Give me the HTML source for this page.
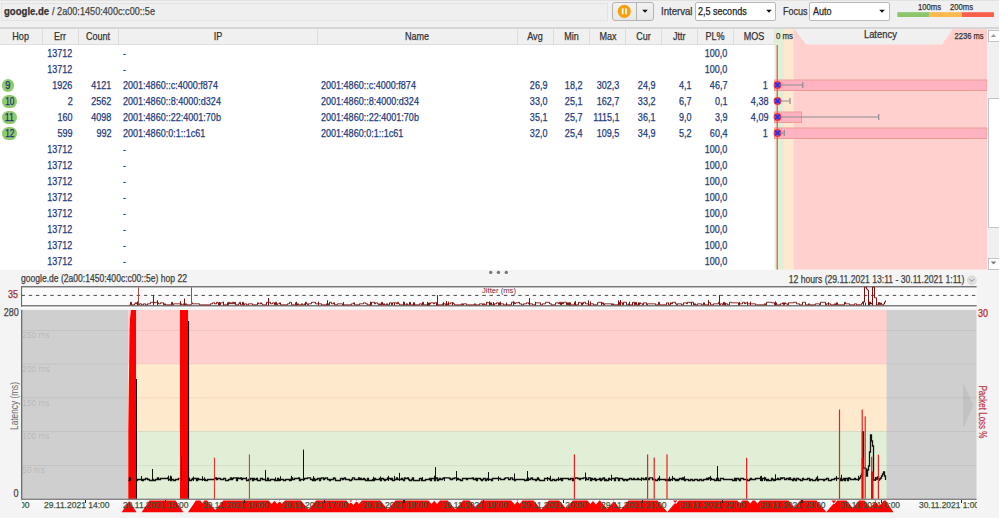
<!DOCTYPE html>
<html><head><meta charset="utf-8"><style>
html,body{margin:0;padding:0;width:999px;height:518px;overflow:hidden;background:#f0f0f0;position:relative}
.t{position:absolute;white-space:pre;font-family:"Liberation Sans",sans-serif;-webkit-text-stroke:0.25px currentColor}
</style></head><body>
<div style="position:absolute;left:0px;top:0px;width:999px;height:1px;background:#e2e2e2;"></div><div style="position:absolute;left:0.5px;top:2.5px;width:607.5px;height:18.0px;background:#efefef;border:1px solid #e3e3e3;box-sizing:border-box;"></div><div style="position:absolute;left:611.5px;top:1.5px;width:42px;height:19px;border:1px solid #b4b4b4;border-radius:3px;box-sizing:border-box;background:linear-gradient(#f2f2f2,#e8e8e8)"></div><div style="position:absolute;left:636px;top:2px;width:1px;height:18px;background:#b4b4b4;"></div><div style="position:absolute;left:694.5px;top:1.5px;width:81px;height:19px;border:1px solid #b9b9b9;border-radius:2px;box-sizing:border-box;background:#fff"></div><div style="position:absolute;left:808.5px;top:1.5px;width:81.5px;height:19px;border:1px solid #b9b9b9;border-radius:2px;box-sizing:border-box;background:#fff"></div><svg style="position:absolute;left:0;top:0" width="999" height="30"><circle cx="624.3" cy="11.3" r="6.6" fill="#f9a10b"/><rect x="621.8" y="8.3" width="1.7" height="6" fill="#fff"/><rect x="625.2" y="8.3" width="1.7" height="6" fill="#fff"/><path d="M642.2 9.8 L647.8 9.8 L645 12.8 Z" fill="#111"/><path d="M766.2 9.8 L771.8 9.8 L769 12.8 Z" fill="#111"/><path d="M879.2 9.8 L884.8 9.8 L882 12.8 Z" fill="#111"/><rect x="897.3" y="12.2" width="32.2" height="4.8" fill="#8cc56a"/><rect x="929.5" y="12.2" width="32.4" height="4.8" fill="#fcb94d"/><rect x="961.9" y="12.2" width="32.1" height="4.8" fill="#f9604e"/></svg><div style="position:absolute;left:0px;top:27px;width:999px;height:2px;background:#d6d6d6;"></div><div style="position:absolute;left:0px;top:43.5px;width:774.5px;height:1.0px;background:#dedede;"></div><div style="position:absolute;left:41.5px;top:29px;width:1.0px;height:14.5px;background:#dcdcdc;"></div><div style="position:absolute;left:77.5px;top:29px;width:1.0px;height:14.5px;background:#dcdcdc;"></div><div style="position:absolute;left:118.0px;top:29px;width:1.0px;height:14.5px;background:#dcdcdc;"></div><div style="position:absolute;left:316.5px;top:29px;width:1.0px;height:14.5px;background:#dcdcdc;"></div><div style="position:absolute;left:516.5px;top:29px;width:1.0px;height:14.5px;background:#dcdcdc;"></div><div style="position:absolute;left:552.5px;top:29px;width:1.0px;height:14.5px;background:#dcdcdc;"></div><div style="position:absolute;left:589.0px;top:29px;width:1.0px;height:14.5px;background:#dcdcdc;"></div><div style="position:absolute;left:625.0px;top:29px;width:1.0px;height:14.5px;background:#dcdcdc;"></div><div style="position:absolute;left:661.0px;top:29px;width:1.0px;height:14.5px;background:#dcdcdc;"></div><div style="position:absolute;left:697.0px;top:29px;width:1.0px;height:14.5px;background:#dcdcdc;"></div><div style="position:absolute;left:733.0px;top:29px;width:1.0px;height:14.5px;background:#dcdcdc;"></div><div style="position:absolute;left:774.0px;top:29px;width:1.0px;height:14.5px;background:#dcdcdc;"></div><div style="position:absolute;left:0px;top:44.5px;width:774.5px;height:225.0px;background:#fff;"></div><svg style="position:absolute;left:0;top:0" width="999" height="270"><rect x="774.5" y="29" width="9.5" height="240.5" fill="#e1efd8"/><rect x="784" y="29" width="9.5" height="240.5" fill="#fde9cf"/><rect x="793.5" y="29" width="193.5" height="240.5" fill="#ffd0ce"/><path d="M794.5 29 L806 44.5 L942 44.5 L952.7 29 Z" fill="#f0f0f0"/><rect x="774.5" y="80" width="212.5" height="10.5" fill="#ffb2c0" stroke="#f09a96" stroke-width="1"/><rect x="774.5" y="112" width="27.0" height="10.5" fill="#ffb2c0" stroke="#f09a96" stroke-width="1"/><rect x="774.5" y="128" width="212.5" height="10.5" fill="#ffb2c0" stroke="#f09a96" stroke-width="1"/><rect x="776.6" y="45" width="1.3" height="224.5" fill="#ea5a4c"/><path d="M778 85 H802.8 M802.8 82 V88" stroke="#8c8c8c" stroke-width="1.2" fill="none"/><path d="M778 101 H790 M790 98 V104" stroke="#8c8c8c" stroke-width="1.2" fill="none"/><path d="M778 117 H878.7 M878.7 114 V120" stroke="#8c8c8c" stroke-width="1.2" fill="none"/><path d="M778 133 H784.3 M784.3 130 V136" stroke="#8c8c8c" stroke-width="1.2" fill="none"/><circle cx="777.5" cy="85" r="3.3" fill="#7a4ad0" stroke="#f03a3a" stroke-width="1.2"/><path d="M775.2 82.7 L779.8 87.3 M779.8 82.7 L775.2 87.3" stroke="#1a30ff" stroke-width="1.5"/><circle cx="777.5" cy="101" r="3.3" fill="#7a4ad0" stroke="#f03a3a" stroke-width="1.2"/><path d="M775.2 98.7 L779.8 103.3 M779.8 98.7 L775.2 103.3" stroke="#1a30ff" stroke-width="1.5"/><circle cx="777.5" cy="117" r="3.3" fill="#7a4ad0" stroke="#f03a3a" stroke-width="1.2"/><path d="M775.2 114.7 L779.8 119.3 M779.8 114.7 L775.2 119.3" stroke="#1a30ff" stroke-width="1.5"/><circle cx="777.5" cy="133" r="3.3" fill="#7a4ad0" stroke="#f03a3a" stroke-width="1.2"/><path d="M775.2 130.7 L779.8 135.3 M779.8 130.7 L775.2 135.3" stroke="#1a30ff" stroke-width="1.5"/></svg><div style="position:absolute;left:987px;top:29px;width:12px;height:240.5px;background:#f0f0f0;"></div><div style="position:absolute;left:988px;top:29.5px;width:12px;height:12px;border:1px solid #c4c4c4;box-sizing:border-box;background:#fff"></div><div style="position:absolute;left:988px;top:98.4px;width:12px;height:129.6px;border:1px solid #c4c4c4;box-sizing:border-box;background:#fff"></div><div style="position:absolute;left:988px;top:257.6px;width:12px;height:12px;border:1px solid #c4c4c4;box-sizing:border-box;background:#fff"></div><svg style="position:absolute;left:0;top:0" width="999" height="270"><path d="M990.8 37 L996.2 37 L993.5 34 Z" fill="#9a9a9a"/><path d="M990.8 261.5 L996.2 261.5 L993.5 264.5 Z" fill="#7a7a7a"/></svg><div style="position:absolute;left:0px;top:269.5px;width:999px;height:248.5px;background:#f4f4f4;"></div><svg style="position:absolute;left:0;top:0" width="999" height="518"><rect x="21" y="286.3" width="955.6" height="20" fill="#fbfbfb"/><rect x="21" y="286.1" width="955.6" height="1.3" fill="#686868"/><rect x="21" y="305" width="955.6" height="1.7" fill="#7c7c7c"/><rect x="21" y="306.7" width="955.6" height="1.3" fill="#fcfcfc"/><rect x="21" y="286.1" width="1.1" height="20.6" fill="#6a6a6a"/><line x1="21.5" y1="295.4" x2="976" y2="295.4" stroke="#4a4a4a" stroke-width="1" stroke-dasharray="3.4 3.8"/><path d="M129.5 304.8 H130.5 V302.3 H131.5 V304.8 H132.5 V304.8 H133.5 V304.8 H134.5 V303.8 H135.5 V302.8 H136.5 V303.8 H137.5 V303.8 H138.5 V304.8 H139.5 V303.8 H140.5 V303.8 H141.5 V304.8 H142.5 V304.8 H143.5 V303.8 H144.5 V303.8 H145.5 V304.8 H146.5 V304.8 H147.5 V303.8 H148.5 V303.8 H149.5 V303.8 H150.5 V302.3 H151.5 V302.3 H152.5 V302.3 H153.5 V302.3 H154.5 V302.8 H155.5 V302.3 H156.5 V302.3 H157.5 V302.8 H158.5 V303.8 H159.5 V303.8 H160.5 V302.8 H161.5 V302.8 H162.5 V302.8 H163.5 V304.8 H164.5 V303.8 H165.5 V304.8 H166.5 V304.8 H167.5 V304.8 H168.5 V304.8 H169.5 V304.8 H170.5 V304.8 H171.5 V302.3 H172.5 V304.8 H173.5 V303.8 H174.5 V303.8 H175.5 V303.8 H176.5 V303.8 H177.5 V303.8 H178.5 V303.8 H179.5 V303.8 H180.5 V303.8 H181.5 V304.8 H182.5 V304.8 H183.5 V303.8 H184.5 V304.8 H185.5 V303.8 H186.5 V304.8 H187.5 V304.8 H188.5 V304.8 H189.5 V304.8 H190.5 V304.8 H191.5 V302.8 H192.5 V303.8 H193.5 V303.8 H194.5 V303.8 H195.5 V303.8 H196.5 V303.8 H197.5 V303.8 H198.5 V303.8 H199.5 V304.8 H200.5 V304.8 H201.5 V304.8 H202.5 V304.8 H203.5 V304.8 H204.5 V304.8 H205.5 V304.8 H206.5 V304.8 H207.5 V304.8 H208.5 V304.8 H209.5 V304.8 H210.5 V303.8 H211.5 V303.8 H212.5 V302.8 H213.5 V302.8 H214.5 V303.8 H215.5 V303.8 H216.5 V302.3 H217.5 V302.8 H218.5 V304.8 H219.5 V304.8 H220.5 V302.8 H221.5 V302.8 H222.5 V302.8 H223.5 V304.8 H224.5 V304.8 H225.5 V304.8 H226.5 V304.8 H227.5 V304.8 H228.5 V302.3 H229.5 V303.8 H230.5 V302.8 H231.5 V303.8 H232.5 V302.3 H233.5 V303.8 H234.5 V302.3 H235.5 V304.8 H236.5 V304.8 H237.5 V304.8 H238.5 V303.8 H239.5 V302.3 H240.5 V304.8 H241.5 V304.8 H242.5 V302.3 H243.5 V304.8 H244.5 V303.8 H245.5 V303.8 H246.5 V304.8 H247.5 V304.8 H248.5 V303.8 H249.5 V303.8 H250.5 V303.8 H251.5 V303.8 H252.5 V304.8 H253.5 V304.8 H254.5 V304.8 H255.5 V304.8 H256.5 V304.8 H257.5 V302.8 H258.5 V303.8 H259.5 V303.8 H260.5 V302.8 H261.5 V303.8 H262.5 V304.8 H263.5 V304.8 H264.5 V304.8 H265.5 V304.8 H266.5 V302.3 H267.5 V302.3 H268.5 V302.3 H269.5 V302.3 H270.5 V303.8 H271.5 V303.8 H272.5 V302.8 H273.5 V302.8 H274.5 V304.8 H275.5 V302.3 H276.5 V304.8 H277.5 V303.8 H278.5 V303.8 H279.5 V302.8 H280.5 V304.8 H281.5 V304.8 H282.5 V304.8 H283.5 V304.8 H284.5 V304.8 H285.5 V304.8 H286.5 V304.8 H287.5 V303.8 H288.5 V303.8 H289.5 V302.3 H290.5 V302.3 H291.5 V304.8 H292.5 V304.8 H293.5 V304.8 H294.5 V304.8 H295.5 V302.8 H296.5 V304.8 H297.5 V303.8 H298.5 V304.8 H299.5 V304.8 H300.5 V304.8 H301.5 V303.8 H302.5 V304.8 H303.5 V304.8 H304.5 V303.8 H305.5 V302.3 H306.5 V303.8 H307.5 V304.8 H308.5 V303.8 H309.5 V303.8 H310.5 V303.8 H311.5 V302.3 H312.5 V302.3 H313.5 V302.3 H314.5 V302.3 H315.5 V303.8 H316.5 V303.8 H317.5 V303.8 H318.5 V303.8 H319.5 V303.8 H320.5 V303.8 H321.5 V304.8 H322.5 V304.8 H323.5 V304.8 H324.5 V304.8 H325.5 V304.8 H326.5 V303.8 H327.5 V303.8 H328.5 V304.8 H329.5 V302.3 H330.5 V302.3 H331.5 V303.8 H332.5 V303.8 H333.5 V302.8 H334.5 V304.8 H335.5 V304.8 H336.5 V304.8 H337.5 V303.8 H338.5 V303.8 H339.5 V303.8 H340.5 V303.8 H341.5 V303.8 H342.5 V304.8 H343.5 V304.8 H344.5 V304.8 H345.5 V304.8 H346.5 V304.8 H347.5 V304.8 H348.5 V304.8 H349.5 V304.8 H350.5 V304.8 H351.5 V303.8 H352.5 V303.8 H353.5 V302.8 H354.5 V304.8 H355.5 V304.8 H356.5 V304.8 H357.5 V304.8 H358.5 V304.8 H359.5 V303.8 H360.5 V303.8 H361.5 V303.8 H362.5 V303.8 H363.5 V302.8 H364.5 V302.8 H365.5 V303.8 H366.5 V303.8 H367.5 V304.8 H368.5 V304.8 H369.5 V304.8 H370.5 V304.8 H371.5 V302.3 H372.5 V302.3 H373.5 V302.3 H374.5 V303.8 H375.5 V302.8 H376.5 V302.8 H377.5 V303.8 H378.5 V304.8 H379.5 V303.8 H380.5 V304.8 H381.5 V302.3 H382.5 V304.8 H383.5 V303.8 H384.5 V304.8 H385.5 V304.8 H386.5 V303.8 H387.5 V304.8 H388.5 V304.8 H389.5 V302.8 H390.5 V302.8 H391.5 V304.8 H392.5 V302.8 H393.5 V302.8 H394.5 V302.8 H395.5 V302.8 H396.5 V303.8 H397.5 V302.3 H398.5 V303.8 H399.5 V304.8 H400.5 V304.8 H401.5 V304.8 H402.5 V304.8 H403.5 V302.3 H404.5 V304.8 H405.5 V304.8 H406.5 V303.8 H407.5 V304.8 H408.5 V304.8 H409.5 V302.3 H410.5 V304.8 H411.5 V304.8 H412.5 V304.8 H413.5 V304.8 H414.5 V304.8 H415.5 V304.8 H416.5 V304.8 H417.5 V304.8 H418.5 V304.8 H419.5 V303.8 H420.5 V303.8 H421.5 V304.8 H422.5 V302.3 H423.5 V304.8 H424.5 V304.8 H425.5 V304.8 H426.5 V304.8 H427.5 V304.8 H428.5 V304.8 H429.5 V303.8 H430.5 V302.8 H431.5 V302.8 H432.5 V302.8 H433.5 V303.8 H434.5 V302.8 H435.5 V302.8 H436.5 V304.8 H437.5 V304.8 H438.5 V304.8 H439.5 V304.8 H440.5 V304.8 H441.5 V304.8 H442.5 V303.8 H443.5 V303.8 H444.5 V303.8 H445.5 V304.8 H446.5 V304.8 H447.5 V303.8 H448.5 V303.8 H449.5 V303.8 H450.5 V302.8 H451.5 V302.8 H452.5 V302.8 H453.5 V303.8 H454.5 V304.8 H455.5 V304.8 H456.5 V304.8 H457.5 V304.8 H458.5 V304.8 H459.5 V304.8 H460.5 V304.8 H461.5 V303.8 H462.5 V304.8 H463.5 V303.8 H464.5 V303.8 H465.5 V303.8 H466.5 V304.8 H467.5 V304.8 H468.5 V304.8 H469.5 V304.8 H470.5 V304.8 H471.5 V304.8 H472.5 V304.8 H473.5 V304.8 H474.5 V303.8 H475.5 V304.8 H476.5 V304.8 H477.5 V304.8 H478.5 V304.8 H479.5 V303.8 H480.5 V303.8 H481.5 V303.8 H482.5 V304.8 H483.5 V303.8 H484.5 V304.8 H485.5 V304.8 H486.5 V302.3 H487.5 V302.8 H488.5 V302.8 H489.5 V304.8 H490.5 V302.8 H491.5 V304.8 H492.5 V304.8 H493.5 V304.8 H494.5 V303.8 H495.5 V303.8 H496.5 V302.8 H497.5 V302.8 H498.5 V304.8 H499.5 V302.8 H500.5 V303.8 H501.5 V303.8 H502.5 V303.8 H503.5 V304.8 H504.5 V304.8 H505.5 V304.8 H506.5 V304.8 H507.5 V304.8 H508.5 V304.8 H509.5 V304.8 H510.5 V304.8 H511.5 V302.3 H512.5 V302.3 H513.5 V302.3 H514.5 V303.8 H515.5 V302.8 H516.5 V302.8 H517.5 V302.8 H518.5 V302.3 H519.5 V303.8 H520.5 V303.8 H521.5 V304.8 H522.5 V304.8 H523.5 V303.8 H524.5 V303.8 H525.5 V303.8 H526.5 V302.8 H527.5 V302.8 H528.5 V303.8 H529.5 V303.8 H530.5 V303.8 H531.5 V303.8 H532.5 V304.8 H533.5 V304.8 H534.5 V304.8 H535.5 V302.8 H536.5 V302.8 H537.5 V302.8 H538.5 V302.8 H539.5 V302.8 H540.5 V304.8 H541.5 V304.8 H542.5 V303.8 H543.5 V303.8 H544.5 V303.8 H545.5 V302.3 H546.5 V302.3 H547.5 V302.3 H548.5 V302.3 H549.5 V303.8 H550.5 V303.8 H551.5 V304.8 H552.5 V304.8 H553.5 V304.8 H554.5 V304.8 H555.5 V302.8 H556.5 V302.8 H557.5 V302.8 H558.5 V303.8 H559.5 V302.3 H560.5 V304.8 H561.5 V302.3 H562.5 V303.8 H563.5 V302.3 H564.5 V302.3 H565.5 V302.3 H566.5 V304.8 H567.5 V302.8 H568.5 V304.8 H569.5 V302.8 H570.5 V304.8 H571.5 V304.8 H572.5 V304.8 H573.5 V304.8 H574.5 V302.3 H575.5 V304.8 H576.5 V304.8 H577.5 V304.8 H578.5 V302.3 H579.5 V302.8 H580.5 V302.8 H581.5 V304.8 H582.5 V303.8 H583.5 V302.3 H584.5 V302.3 H585.5 V303.8 H586.5 V303.8 H587.5 V303.8 H588.5 V304.8 H589.5 V304.8 H590.5 V303.8 H591.5 V303.8 H592.5 V303.8 H593.5 V304.8 H594.5 V304.8 H595.5 V304.8 H596.5 V304.8 H597.5 V302.8 H598.5 V302.3 H599.5 V302.3 H600.5 V302.3 H601.5 V303.8 H602.5 V302.8 H603.5 V304.8 H604.5 V303.8 H605.5 V303.8 H606.5 V303.8 H607.5 V303.8 H608.5 V303.8 H609.5 V303.8 H610.5 V303.8 H611.5 V304.8 H612.5 V303.8 H613.5 V304.8 H614.5 V304.8 H615.5 V304.8 H616.5 V304.8 H617.5 V304.8 H618.5 V304.8 H619.5 V302.3 H620.5 V302.8 H621.5 V302.8 H622.5 V304.8 H623.5 V302.3 H624.5 V302.3 H625.5 V302.3 H626.5 V304.8 H627.5 V304.8 H628.5 V303.8 H629.5 V304.8 H630.5 V304.8 H631.5 V304.8 H632.5 V302.8 H633.5 V302.3 H634.5 V304.8 H635.5 V302.3 H636.5 V304.8 H637.5 V304.8 H638.5 V304.8 H639.5 V302.8 H640.5 V303.8 H641.5 V303.8 H642.5 V304.8 H643.5 V302.8 H644.5 V302.8 H645.5 V302.8 H646.5 V304.8 H647.5 V303.8 H648.5 V303.8 H649.5 V303.8 H650.5 V303.8 H651.5 V303.8 H652.5 V303.8 H653.5 V303.8 H654.5 V303.8 H655.5 V304.8 H656.5 V304.8 H657.5 V304.8 H658.5 V302.3 H659.5 V304.8 H660.5 V304.8 H661.5 V304.8 H662.5 V304.8 H663.5 V304.8 H664.5 V304.8 H665.5 V304.8 H666.5 V302.8 H667.5 V302.8 H668.5 V304.8 H669.5 V304.8 H670.5 V302.8 H671.5 V303.8 H672.5 V302.3 H673.5 V302.3 H674.5 V302.3 H675.5 V303.8 H676.5 V304.8 H677.5 V303.8 H678.5 V303.8 H679.5 V303.8 H680.5 V303.8 H681.5 V304.8 H682.5 V304.8 H683.5 V302.8 H684.5 V302.8 H685.5 V302.8 H686.5 V303.8 H687.5 V302.3 H688.5 V302.3 H689.5 V302.8 H690.5 V302.3 H691.5 V302.3 H692.5 V302.3 H693.5 V304.8 H694.5 V303.8 H695.5 V304.8 H696.5 V304.8 H697.5 V303.8 H698.5 V303.8 H699.5 V303.8 H700.5 V303.8 H701.5 V304.8 H702.5 V304.8 H703.5 V302.8 H704.5 V304.8 H705.5 V304.8 H706.5 V304.8 H707.5 V304.8 H708.5 V302.3 H709.5 V302.8 H710.5 V304.8 H711.5 V304.8 H712.5 V304.8 H713.5 V303.8 H714.5 V303.8 H715.5 V303.8 H716.5 V303.8 H717.5 V303.8 H718.5 V302.3 H719.5 V304.8 H720.5 V303.8 H721.5 V303.8 H722.5 V304.8 H723.5 V302.3 H724.5 V304.8 H725.5 V303.8 H726.5 V303.8 H727.5 V304.8 H728.5 V304.8 H729.5 V302.3 H730.5 V302.3 H731.5 V302.8 H732.5 V302.8 H733.5 V302.8 H734.5 V302.8 H735.5 V302.8 H736.5 V302.8 H737.5 V302.8 H738.5 V304.8 H739.5 V303.8 H740.5 V303.8 H741.5 V303.8 H742.5 V302.3 H743.5 V302.3 H744.5 V303.8 H745.5 V302.8 H746.5 V302.8 H747.5 V303.8 H748.5 V303.8 H749.5 V303.8 H750.5 V303.8 H751.5 V303.8 H752.5 V303.8 H753.5 V303.8 H754.5 V303.8 H755.5 V304.8 H756.5 V304.8 H757.5 V304.8 H758.5 V304.8 H759.5 V304.8 H760.5 V304.8 H761.5 V304.8 H762.5 V304.8 H763.5 V304.8 H764.5 V303.8 H765.5 V304.8 H766.5 V302.3 H767.5 V302.3 H768.5 V302.3 H769.5 V302.3 H770.5 V302.3 H771.5 V302.8 H772.5 V302.8 H773.5 V302.8 H774.5 V304.8 H775.5 V302.8 H776.5 V304.8 H777.5 V304.8 H778.5 V304.8 H779.5 V304.8 H780.5 V303.8 H781.5 V303.8 H782.5 V302.8 H783.5 V304.8 H784.5 V302.8 H785.5 V303.8 H786.5 V303.8 H787.5 V304.8 H788.5 V302.8 H789.5 V302.8 H790.5 V302.8 H791.5 V302.8 H792.5 V302.8 H793.5 V302.3 H794.5 V302.3 H795.5 V302.3 H796.5 V303.8 H797.5 V303.8 H798.5 V303.8 H799.5 V304.8 H800.5 V304.8 H801.5 V304.8 H802.5 V302.3 H803.5 V302.3 H804.5 V302.3 H805.5 V304.8 H806.5 V304.8 H807.5 V304.8 H808.5 V303.8 H809.5 V304.8 H810.5 V304.8 H811.5 V304.8 H812.5 V304.8 H813.5 V304.8 H814.5 V304.8 H815.5 V303.8 H816.5 V303.8 H817.5 V303.8 H818.5 V303.8 H819.5 V304.8 H820.5 V302.3 H821.5 V302.3 H822.5 V302.3 H823.5 V302.3 H824.5 V302.3 H825.5 V304.8 H826.5 V303.8 H827.5 V303.8 H828.5 V303.8 H829.5 V303.8 H830.5 V304.8 H831.5 V304.8 H832.5 V304.8 H833.5 V304.8 H834.5 V303.8 H835.5 V304.8 H836.5 V302.8 H837.5 V304.8 H838.5 V304.8 H839.5 V304.8 H840.5 V304.8 H841.5 V304.8 H842.5 V304.8 H843.5 V304.8 H844.5 V302.3 H845.5 V303.8 H846.5 V303.8 H847.5 V303.8 H848.5 V303.8 H849.5 V304.8 H850.5 V304.8 H851.5 V304.8 H852.5 V304.8 H853.5 V304.8 H854.5 V303.8 H855.5 V303.8 H856.5 V304.8 H857.5 V304.8 H858.5 V304.7 H859.5 V304.7 H860.5 V304.7 H861.5 V303.5 H862.5 V302.0 H863.5 V302.0 H864.5 V287.2 H865.5 V287.2 H866.5 V289.0 H867.5 V290.0 H868.5 V305.0 H869.5 V302.0 H870.5 V304.0 H871.5 V303.0 H872.5 V287.2 H873.5 V287.2 H874.5 V297.8 H875.5 V297.8 H876.5 V305.0 H877.5 V304.7 H878.5 V302.5 H879.5 V304.7 H880.5 V303.0 H881.5 V304.7 H882.5 V304.7 H883.5 V304.0 H884.5 V302.0 H885.5 V300.5" fill="none" stroke="#7d0f0f" stroke-width="1"/><rect x="137.0" y="301.5" width="1" height="3.8" fill="#7d0f0f"/><rect x="157.0" y="300.2" width="1" height="5.1" fill="#7d0f0f"/><rect x="180.0" y="301.2" width="1" height="4.1" fill="#7d0f0f"/><rect x="219.0" y="301.9" width="1" height="3.4" fill="#7d0f0f"/><rect x="223.0" y="301.6" width="1" height="3.7" fill="#7d0f0f"/><rect x="227.0" y="302.5" width="1" height="2.8" fill="#7d0f0f"/><rect x="296.0" y="301.8" width="1" height="3.5" fill="#7d0f0f"/><rect x="305.0" y="302.4" width="1" height="2.9" fill="#7d0f0f"/><rect x="318.0" y="301.8" width="1" height="3.5" fill="#7d0f0f"/><rect x="327.0" y="300.2" width="1" height="5.1" fill="#7d0f0f"/><rect x="343.0" y="302.1" width="1" height="3.2" fill="#7d0f0f"/><rect x="370.0" y="301.7" width="1" height="3.6" fill="#7d0f0f"/><rect x="394.0" y="302.8" width="1" height="2.5" fill="#7d0f0f"/><rect x="403.0" y="301.6" width="1" height="3.7" fill="#7d0f0f"/><rect x="413.0" y="302.2" width="1" height="3.1" fill="#7d0f0f"/><rect x="414.0" y="302.5" width="1" height="2.8" fill="#7d0f0f"/><rect x="427.0" y="301.9" width="1" height="3.4" fill="#7d0f0f"/><rect x="428.0" y="302.8" width="1" height="2.5" fill="#7d0f0f"/><rect x="429.0" y="302.7" width="1" height="2.6" fill="#7d0f0f"/><rect x="436.0" y="302.4" width="1" height="2.9" fill="#7d0f0f"/><rect x="443.0" y="302.2" width="1" height="3.1" fill="#7d0f0f"/><rect x="446.0" y="301.0" width="1" height="4.3" fill="#7d0f0f"/><rect x="448.0" y="301.7" width="1" height="3.6" fill="#7d0f0f"/><rect x="452.0" y="302.4" width="1" height="2.9" fill="#7d0f0f"/><rect x="489.0" y="301.3" width="1" height="4.0" fill="#7d0f0f"/><rect x="493.0" y="302.1" width="1" height="3.2" fill="#7d0f0f"/><rect x="500.0" y="301.7" width="1" height="3.6" fill="#7d0f0f"/><rect x="506.0" y="302.6" width="1" height="2.7" fill="#7d0f0f"/><rect x="513.0" y="301.4" width="1" height="3.9" fill="#7d0f0f"/><rect x="535.0" y="301.8" width="1" height="3.5" fill="#7d0f0f"/><rect x="569.0" y="302.7" width="1" height="2.6" fill="#7d0f0f"/><rect x="575.0" y="301.1" width="1" height="4.2" fill="#7d0f0f"/><rect x="582.0" y="302.5" width="1" height="2.8" fill="#7d0f0f"/><rect x="588.0" y="300.4" width="1" height="4.9" fill="#7d0f0f"/><rect x="590.0" y="301.5" width="1" height="3.8" fill="#7d0f0f"/><rect x="601.0" y="302.4" width="1" height="2.9" fill="#7d0f0f"/><rect x="618.0" y="300.4" width="1" height="4.9" fill="#7d0f0f"/><rect x="620.0" y="300.0" width="1" height="5.3" fill="#7d0f0f"/><rect x="629.0" y="301.7" width="1" height="3.6" fill="#7d0f0f"/><rect x="632.0" y="302.2" width="1" height="3.1" fill="#7d0f0f"/><rect x="638.0" y="302.3" width="1" height="3.0" fill="#7d0f0f"/><rect x="691.0" y="302.0" width="1" height="3.3" fill="#7d0f0f"/><rect x="708.0" y="300.1" width="1" height="5.2" fill="#7d0f0f"/><rect x="725.0" y="302.8" width="1" height="2.5" fill="#7d0f0f"/><rect x="739.0" y="302.1" width="1" height="3.2" fill="#7d0f0f"/><rect x="747.0" y="301.7" width="1" height="3.6" fill="#7d0f0f"/><rect x="750.0" y="301.7" width="1" height="3.6" fill="#7d0f0f"/><rect x="775.0" y="301.5" width="1" height="3.8" fill="#7d0f0f"/><rect x="828.0" y="302.2" width="1" height="3.1" fill="#7d0f0f"/><rect x="863.0" y="301.6" width="1" height="3.7" fill="#7d0f0f"/><rect x="865.0" y="302.6" width="1" height="2.7" fill="#7d0f0f"/><rect x="872.0" y="301.7" width="1" height="3.6" fill="#7d0f0f"/><rect x="153.0" y="295.0" width="1" height="10.3" fill="#7d0f0f"/><rect x="184.0" y="298.6" width="1" height="6.7" fill="#7d0f0f"/><rect x="268.0" y="298.0" width="1" height="7.3" fill="#7d0f0f"/><rect x="437.0" y="295.0" width="1" height="10.3" fill="#7d0f0f"/><rect x="529.0" y="298.0" width="1" height="7.3" fill="#7d0f0f"/><rect x="719.0" y="295.0" width="1" height="10.3" fill="#7d0f0f"/><rect x="138" y="287.4" width="1" height="17.6" fill="#9c4a4a"/><rect x="191" y="287.4" width="1" height="17.6" fill="#9c4a4a"/><text x="482" y="293.3" font-family="Liberation Sans" font-size="8" fill="#7a1f3a" textLength="34" lengthAdjust="spacingAndGlyphs">Jitter (ms)</text><rect x="22" y="310" width="954.5" height="189" fill="#cfcfcf"/><rect x="128" y="310" width="758.6" height="54" fill="#ffd0ce"/><rect x="128" y="364" width="758.6" height="67.5" fill="#ffeacd"/><rect x="128" y="431.5" width="758.6" height="67.5" fill="#e0efd5"/><rect x="22" y="329.9" width="954.5" height="1" fill="#000" fill-opacity="0.06"/><rect x="22" y="363.5" width="954.5" height="1" fill="#000" fill-opacity="0.06"/><rect x="22" y="397.4" width="954.5" height="1" fill="#000" fill-opacity="0.06"/><rect x="22" y="431.1" width="954.5" height="1" fill="#000" fill-opacity="0.06"/><rect x="22" y="465.1" width="954.5" height="1" fill="#000" fill-opacity="0.06"/><text x="22.3" y="338.2" font-family="Liberation Sans" font-size="9.5" fill="#000" fill-opacity="0.14" textLength="27.5" lengthAdjust="spacingAndGlyphs">250 ms</text><text x="22.3" y="371.8" font-family="Liberation Sans" font-size="9.5" fill="#000" fill-opacity="0.14" textLength="27.5" lengthAdjust="spacingAndGlyphs">200 ms</text><text x="22.3" y="405.7" font-family="Liberation Sans" font-size="9.5" fill="#000" fill-opacity="0.14" textLength="27.5" lengthAdjust="spacingAndGlyphs">150 ms</text><text x="22.3" y="439.40000000000003" font-family="Liberation Sans" font-size="9.5" fill="#000" fill-opacity="0.14" textLength="27.5" lengthAdjust="spacingAndGlyphs">100 ms</text><text x="22.3" y="473.40000000000003" font-family="Liberation Sans" font-size="9.5" fill="#000" fill-opacity="0.14" textLength="22.5" lengthAdjust="spacingAndGlyphs">50 ms</text><path d="M128.3 499 L128.3 431 L129.6 330.6 L130 319 L131 310 L136 310 L136 499 Z" fill="#f00"/><rect x="136" y="379" width="1" height="120" fill="#111"/><rect x="180" y="310" width="8" height="189" fill="#f00"/><rect x="188" y="321" width="1.1" height="178" fill="#111"/><path d="M128.5 480.5 H129.5 V477.9 H130.5 V480.5" fill="none" stroke="#111" stroke-width="1.3"/><path d="M136.5 480.5 H137.5 V479.5 H138.5 V479.5 H139.5 V479.5 H140.5 V479.5 H141.5 V479.5 H142.5 V480.5 H143.5 V479.5 H144.5 V479.5 H145.5 V478.5 H146.5 V478.5 H147.5 V479.5 H148.5 V479.5 H149.5 V480.5 H150.5 V480.5 H151.5 V480.5 H152.5 V479.5 H153.5 V480.5 H154.5 V480.5 H155.5 V479.5 H156.5 V479.5 H157.5 V477.9 H158.5 V479.5 H159.5 V479.5 H160.5 V478.5 H161.5 V478.5 H162.5 V478.5 H163.5 V478.5 H164.5 V478.5 H165.5 V478.5 H166.5 V478.5 H167.5 V477.9 H168.5 V479.5 H169.5 V479.5 H170.5 V480.5 H171.5 V479.5 H172.5 V479.5 H173.5 V480.5 H174.5 V480.5 H175.5 V479.5 H176.5 V479.5 H177.5 V479.5 H178.5 V478.5 H179.5 V478.5" fill="none" stroke="#111" stroke-width="1.3"/><rect x="141.0" y="476.0" width="1" height="5.0" fill="#111"/><rect x="168.0" y="475.6" width="1" height="5.4" fill="#111"/><rect x="170.0" y="475.6" width="1" height="5.4" fill="#111"/><rect x="171.0" y="476.3" width="1" height="4.7" fill="#111"/><path d="M188.5 478.5 H189.5 V480.5 H190.5 V480.5 H191.5 V479.5 H192.5 V478.5 H193.5 V478.5 H194.5 V478.5 H195.5 V478.5 H196.5 V480.5 H197.5 V478.5 H198.5 V479.5 H199.5 V479.5 H200.5 V479.5 H201.5 V479.5 H202.5 V479.5 H203.5 V479.5 H204.5 V479.5 H205.5 V480.5 H206.5 V480.5 H207.5 V479.5 H208.5 V479.5 H209.5 V479.5 H210.5 V479.5 H211.5 V479.5 H212.5 V479.5 H213.5 V479.5 H214.5 V478.5 H215.5 V477.9 H216.5 V479.5 H217.5 V478.5 H218.5 V478.5 H219.5 V478.5 H220.5 V479.5 H221.5 V479.5 H222.5 V479.5 H223.5 V478.5 H224.5 V478.5 H225.5 V480.5 H226.5 V480.5 H227.5 V480.5 H228.5 V479.5 H229.5 V479.5 H230.5 V477.9 H231.5 V479.5 H232.5 V478.5 H233.5 V477.9 H234.5 V477.9 H235.5 V477.9 H236.5 V480.5 H237.5 V477.9 H238.5 V478.5 H239.5 V478.5 H240.5 V477.9 H241.5 V479.5 H242.5 V478.5 H243.5 V478.5 H244.5 V478.5 H245.5 V478.5 H246.5 V480.5 H247.5 V480.5 H248.5 V479.5 H249.5 V479.5 H250.5 V478.5 H251.5 V478.5 H252.5 V480.5 H253.5 V478.5 H254.5 V479.5 H255.5 V479.5 H256.5 V478.5 H257.5 V480.5 H258.5 V480.5 H259.5 V480.5 H260.5 V478.5 H261.5 V478.5 H262.5 V479.5 H263.5 V479.5 H264.5 V479.5 H265.5 V480.5 H266.5 V480.5 H267.5 V478.5 H268.5 V480.5 H269.5 V480.5 H270.5 V479.5 H271.5 V479.5 H272.5 V479.5 H273.5 V479.5 H274.5 V480.5 H275.5 V480.5 H276.5 V480.5 H277.5 V478.5 H278.5 V480.5 H279.5 V479.5 H280.5 V479.5 H281.5 V479.5 H282.5 V479.5 H283.5 V480.5 H284.5 V480.5 H285.5 V479.5 H286.5 V479.5 H287.5 V479.5 H288.5 V479.5 H289.5 V480.5 H290.5 V479.5 H291.5 V477.9 H292.5 V479.5 H293.5 V479.5 H294.5 V478.5 H295.5 V478.5 H296.5 V478.5 H297.5 V478.5 H298.5 V477.9 H299.5 V480.5 H300.5 V479.5 H301.5 V479.5 H302.5 V479.5 H303.5 V479.5 H304.5 V478.5 H305.5 V478.5 H306.5 V478.5 H307.5 V477.9 H308.5 V477.9 H309.5 V477.9 H310.5 V479.5 H311.5 V479.5 H312.5 V480.5 H313.5 V478.5 H314.5 V480.5 H315.5 V479.5 H316.5 V479.5 H317.5 V478.5 H318.5 V478.5 H319.5 V480.5 H320.5 V478.5 H321.5 V477.9 H322.5 V477.9 H323.5 V479.5 H324.5 V478.5 H325.5 V477.9 H326.5 V477.9 H327.5 V479.5 H328.5 V479.5 H329.5 V480.5 H330.5 V479.5 H331.5 V479.5 H332.5 V479.5 H333.5 V477.9 H334.5 V478.5 H335.5 V480.5 H336.5 V480.5 H337.5 V480.5 H338.5 V480.5 H339.5 V480.5 H340.5 V478.5 H341.5 V478.5 H342.5 V479.5 H343.5 V478.5 H344.5 V477.9 H345.5 V479.5 H346.5 V479.5 H347.5 V479.5 H348.5 V479.5 H349.5 V480.5 H350.5 V480.5 H351.5 V479.5 H352.5 V477.9 H353.5 V477.9 H354.5 V479.5 H355.5 V479.5 H356.5 V479.5 H357.5 V479.5 H358.5 V477.9 H359.5 V479.5 H360.5 V478.5 H361.5 V479.5 H362.5 V479.5 H363.5 V478.5 H364.5 V479.5 H365.5 V480.5 H366.5 V480.5 H367.5 V478.5 H368.5 V480.5 H369.5 V480.5 H370.5 V480.5 H371.5 V480.5 H372.5 V479.5 H373.5 V480.5 H374.5 V478.5 H375.5 V479.5 H376.5 V479.5 H377.5 V479.5 H378.5 V479.5 H379.5 V478.5 H380.5 V480.5 H381.5 V478.5 H382.5 V478.5 H383.5 V479.5 H384.5 V480.5 H385.5 V479.5 H386.5 V479.5 H387.5 V477.9 H388.5 V478.5 H389.5 V478.5 H390.5 V479.5 H391.5 V478.5 H392.5 V480.5 H393.5 V480.5 H394.5 V479.5 H395.5 V479.5 H396.5 V477.9 H397.5 V479.5 H398.5 V479.5 H399.5 V479.5 H400.5 V479.5 H401.5 V478.5 H402.5 V479.5 H403.5 V480.5 H404.5 V477.9 H405.5 V478.5 H406.5 V478.5 H407.5 V477.9 H408.5 V479.5 H409.5 V480.5 H410.5 V480.5 H411.5 V479.5 H412.5 V477.9 H413.5 V480.5 H414.5 V480.5 H415.5 V480.5 H416.5 V480.5 H417.5 V480.5 H418.5 V480.5 H419.5 V478.5 H420.5 V478.5 H421.5 V480.5 H422.5 V480.5 H423.5 V480.5 H424.5 V480.5 H425.5 V479.5 H426.5 V479.5 H427.5 V479.5 H428.5 V479.5 H429.5 V478.5 H430.5 V480.5 H431.5 V478.5 H432.5 V478.5 H433.5 V478.5 H434.5 V480.5 H435.5 V478.5 H436.5 V477.9 H437.5 V480.5 H438.5 V479.5 H439.5 V478.5 H440.5 V479.5 H441.5 V479.5 H442.5 V478.5 H443.5 V477.9 H444.5 V477.9 H445.5 V477.9 H446.5 V477.9 H447.5 V477.9 H448.5 V477.9 H449.5 V478.5 H450.5 V479.5 H451.5 V479.5 H452.5 V478.5 H453.5 V478.5 H454.5 V477.9 H455.5 V477.9 H456.5 V479.5 H457.5 V478.5 H458.5 V479.5 H459.5 V479.5 H460.5 V480.5 H461.5 V480.5 H462.5 V478.5 H463.5 V478.5 H464.5 V478.5 H465.5 V478.5 H466.5 V479.5 H467.5 V478.5 H468.5 V478.5 H469.5 V478.5 H470.5 V478.5 H471.5 V478.5 H472.5 V477.9 H473.5 V479.5 H474.5 V479.5 H475.5 V478.5 H476.5 V480.5 H477.5 V478.5 H478.5 V478.5 H479.5 V478.5 H480.5 V479.5 H481.5 V480.5 H482.5 V479.5 H483.5 V478.5 H484.5 V478.5 H485.5 V480.5 H486.5 V479.5 H487.5 V478.5 H488.5 V479.5 H489.5 V479.5 H490.5 V479.5 H491.5 V480.5 H492.5 V478.5 H493.5 V478.5 H494.5 V478.5 H495.5 V478.5 H496.5 V478.5 H497.5 V478.5 H498.5 V478.5 H499.5 V478.5 H500.5 V479.5 H501.5 V479.5 H502.5 V479.5 H503.5 V479.5 H504.5 V478.5 H505.5 V477.9 H506.5 V477.9 H507.5 V477.9 H508.5 V479.5 H509.5 V479.5 H510.5 V477.9 H511.5 V477.9 H512.5 V479.5 H513.5 V479.5 H514.5 V480.5 H515.5 V479.5 H516.5 V479.5 H517.5 V479.5 H518.5 V479.5 H519.5 V479.5 H520.5 V479.5 H521.5 V479.5 H522.5 V479.5 H523.5 V479.5 H524.5 V480.5 H525.5 V480.5 H526.5 V479.5 H527.5 V478.5 H528.5 V479.5 H529.5 V479.5 H530.5 V478.5 H531.5 V477.9 H532.5 V479.5 H533.5 V479.5 H534.5 V479.5 H535.5 V480.5 H536.5 V479.5 H537.5 V477.9 H538.5 V479.5 H539.5 V480.5 H540.5 V480.5 H541.5 V480.5 H542.5 V480.5 H543.5 V480.5 H544.5 V478.5 H545.5 V478.5 H546.5 V478.5 H547.5 V478.5 H548.5 V478.5 H549.5 V479.5 H550.5 V480.5 H551.5 V480.5 H552.5 V479.5 H553.5 V479.5 H554.5 V480.5 H555.5 V480.5 H556.5 V479.5 H557.5 V479.5 H558.5 V479.5 H559.5 V479.5 H560.5 V478.5 H561.5 V480.5 H562.5 V478.5 H563.5 V478.5 H564.5 V478.5 H565.5 V478.5 H566.5 V478.5 H567.5 V478.5 H568.5 V479.5 H569.5 V479.5 H570.5 V478.5 H571.5 V478.5 H572.5 V480.5 H573.5 V478.5 H574.5 V478.5 H575.5 V477.9 H576.5 V477.9 H577.5 V478.5 H578.5 V478.5 H579.5 V479.5 H580.5 V478.5 H581.5 V478.5 H582.5 V478.5 H583.5 V477.9 H584.5 V477.9 H585.5 V477.9 H586.5 V479.5 H587.5 V479.5 H588.5 V477.9 H589.5 V477.9 H590.5 V480.5 H591.5 V478.5 H592.5 V479.5 H593.5 V479.5 H594.5 V478.5 H595.5 V480.5 H596.5 V479.5 H597.5 V479.5 H598.5 V479.5 H599.5 V478.5 H600.5 V480.5 H601.5 V479.5 H602.5 V478.5 H603.5 V477.9 H604.5 V480.5 H605.5 V479.5 H606.5 V480.5 H607.5 V480.5 H608.5 V478.5 H609.5 V479.5 H610.5 V479.5 H611.5 V478.5 H612.5 V478.5 H613.5 V478.5 H614.5 V480.5 H615.5 V477.9 H616.5 V477.9 H617.5 V478.5 H618.5 V480.5 H619.5 V478.5 H620.5 V478.5 H621.5 V478.5 H622.5 V479.5 H623.5 V480.5 H624.5 V479.5 H625.5 V479.5 H626.5 V480.5 H627.5 V479.5 H628.5 V479.5 H629.5 V478.5 H630.5 V478.5 H631.5 V479.5 H632.5 V479.5 H633.5 V478.5 H634.5 V479.5 H635.5 V479.5 H636.5 V479.5 H637.5 V478.5 H638.5 V479.5 H639.5 V479.5 H640.5 V479.5 H641.5 V478.5 H642.5 V478.5 H643.5 V479.5 H644.5 V479.5 H645.5 V477.9 H646.5 V479.5 H647.5 V478.5 H648.5 V479.5 H649.5 V477.9 H650.5 V477.9 H651.5 V477.9 H652.5 V479.5 H653.5 V479.5 H654.5 V479.5 H655.5 V480.5 H656.5 V480.5 H657.5 V479.5 H658.5 V478.5 H659.5 V479.5 H660.5 V479.5 H661.5 V479.5 H662.5 V479.5 H663.5 V479.5 H664.5 V479.5 H665.5 V480.5 H666.5 V479.5 H667.5 V480.5 H668.5 V479.5 H669.5 V480.5 H670.5 V479.5 H671.5 V479.5 H672.5 V478.5 H673.5 V478.5 H674.5 V479.5 H675.5 V480.5 H676.5 V479.5 H677.5 V480.5 H678.5 V479.5 H679.5 V478.5 H680.5 V478.5 H681.5 V479.5 H682.5 V477.9 H683.5 V479.5 H684.5 V480.5 H685.5 V479.5 H686.5 V479.5 H687.5 V479.5 H688.5 V480.5 H689.5 V480.5 H690.5 V479.5 H691.5 V479.5 H692.5 V480.5 H693.5 V480.5 H694.5 V479.5 H695.5 V479.5 H696.5 V479.5 H697.5 V480.5 H698.5 V480.5 H699.5 V479.5 H700.5 V479.5 H701.5 V480.5 H702.5 V480.5 H703.5 V479.5 H704.5 V479.5 H705.5 V479.5 H706.5 V478.5 H707.5 V479.5 H708.5 V477.9 H709.5 V478.5 H710.5 V478.5 H711.5 V479.5 H712.5 V479.5 H713.5 V479.5 H714.5 V480.5 H715.5 V480.5 H716.5 V478.5 H717.5 V478.5 H718.5 V480.5 H719.5 V480.5 H720.5 V478.5 H721.5 V478.5 H722.5 V478.5 H723.5 V479.5 H724.5 V479.5 H725.5 V479.5 H726.5 V479.5 H727.5 V479.5 H728.5 V479.5 H729.5 V479.5 H730.5 V479.5 H731.5 V479.5 H732.5 V480.5 H733.5 V480.5 H734.5 V478.5 H735.5 V480.5 H736.5 V478.5 H737.5 V478.5 H738.5 V479.5 H739.5 V480.5 H740.5 V478.5 H741.5 V478.5 H742.5 V478.5 H743.5 V479.5 H744.5 V479.5 H745.5 V479.5 H746.5 V479.5 H747.5 V480.5 H748.5 V480.5 H749.5 V479.5 H750.5 V478.5 H751.5 V479.5 H752.5 V479.5 H753.5 V479.5 H754.5 V479.5 H755.5 V478.5 H756.5 V478.5 H757.5 V478.5 H758.5 V478.5 H759.5 V478.5 H760.5 V478.5 H761.5 V480.5 H762.5 V478.5 H763.5 V478.5 H764.5 V477.9 H765.5 V479.5 H766.5 V480.5 H767.5 V479.5 H768.5 V480.5 H769.5 V480.5 H770.5 V480.5 H771.5 V478.5 H772.5 V479.5 H773.5 V480.5 H774.5 V479.5 H775.5 V479.5 H776.5 V479.5 H777.5 V478.5 H778.5 V479.5 H779.5 V479.5 H780.5 V477.9 H781.5 V478.5 H782.5 V477.9 H783.5 V477.9 H784.5 V479.5 H785.5 V479.5 H786.5 V478.5 H787.5 V478.5 H788.5 V479.5 H789.5 V477.9 H790.5 V479.5 H791.5 V479.5 H792.5 V480.5 H793.5 V478.5 H794.5 V479.5 H795.5 V480.5 H796.5 V478.5 H797.5 V478.5 H798.5 V479.5 H799.5 V479.5 H800.5 V480.5 H801.5 V480.5 H802.5 V478.5 H803.5 V479.5 H804.5 V479.5 H805.5 V479.5 H806.5 V479.5 H807.5 V478.5 H808.5 V478.5 H809.5 V480.5 H810.5 V479.5 H811.5 V479.5 H812.5 V480.5 H813.5 V480.5 H814.5 V480.5 H815.5 V479.5 H816.5 V477.9 H817.5 V480.5 H818.5 V479.5 H819.5 V479.5 H820.5 V479.5 H821.5 V479.5 H822.5 V479.5 H823.5 V480.5 H824.5 V479.5 H825.5 V479.5 H826.5 V478.5 H827.5 V478.5 H828.5 V480.5 H829.5 V480.5 H830.5 V480.5 H831.5 V479.5 H832.5 V479.5 H833.5 V479.5 H834.5 V478.5 H835.5 V478.5 H836.5 V478.5 H837.5 V478.5 H838.5 V478.5 H839.5 V478.5 H840.5 V480.5 H841.5 V480.5 H842.5 V479.5 H843.5 V478.5 H844.5 V480.5 H845.5 V478.5 H846.5 V478.5 H847.5 V480.5 H848.5 V477.9 H849.5 V478.5 H850.5 V479.5 H851.5 V479.5 H852.5 V479.5 H853.5 V479.5 H854.5 V478.5 H855.5 V479.5 H856.5 V479.5 H857.5 V479.5 H858.5 V479.0 H859.5 V478.0 H860.5 V476.0 H861.5 V474.0 H862.5 V432.0 H863.5 V468.0 H864.5 V468.0 H865.5 V469.0 H866.5 V476.0 H867.5 V470.0 H868.5 V466.0 H869.5 V452.0 H870.5 V435.0 H871.5 V441.0 H872.5 V446.0 H873.5 V480.0 H874.5 V480.0 H875.5 V478.0 H876.5 V479.0 H877.5 V477.0 H878.5 V480.0 H879.5 V479.0 H880.5 V478.0 H881.5 V476.0 H882.5 V474.0 H883.5 V472.0 H884.5 V476.0 H885.5 V480.0" fill="none" stroke="#111" stroke-width="1.3"/><rect x="193.0" y="476.5" width="1" height="4.5" fill="#111"/><rect x="202.0" y="476.2" width="1" height="4.8" fill="#111"/><rect x="204.0" y="477.3" width="1" height="3.7" fill="#111"/><rect x="246.0" y="477.0" width="1" height="4.0" fill="#111"/><rect x="267.0" y="477.5" width="1" height="3.5" fill="#111"/><rect x="275.0" y="477.3" width="1" height="3.7" fill="#111"/><rect x="280.0" y="476.2" width="1" height="4.8" fill="#111"/><rect x="291.0" y="475.8" width="1" height="5.2" fill="#111"/><rect x="313.0" y="476.1" width="1" height="4.9" fill="#111"/><rect x="373.0" y="476.7" width="1" height="4.3" fill="#111"/><rect x="380.0" y="476.4" width="1" height="4.6" fill="#111"/><rect x="388.0" y="475.8" width="1" height="5.2" fill="#111"/><rect x="394.0" y="475.9" width="1" height="5.1" fill="#111"/><rect x="399.0" y="472.8" width="1" height="8.2" fill="#111"/><rect x="422.0" y="477.0" width="1" height="4.0" fill="#111"/><rect x="434.0" y="475.7" width="1" height="5.3" fill="#111"/><rect x="444.0" y="477.1" width="1" height="3.9" fill="#111"/><rect x="498.0" y="476.3" width="1" height="4.7" fill="#111"/><rect x="514.0" y="473.5" width="1" height="7.5" fill="#111"/><rect x="528.0" y="477.5" width="1" height="3.5" fill="#111"/><rect x="547.0" y="477.0" width="1" height="4.0" fill="#111"/><rect x="550.0" y="475.7" width="1" height="5.3" fill="#111"/><rect x="558.0" y="477.0" width="1" height="4.0" fill="#111"/><rect x="585.0" y="472.5" width="1" height="8.5" fill="#111"/><rect x="611.0" y="474.7" width="1" height="6.3" fill="#111"/><rect x="641.0" y="477.4" width="1" height="3.6" fill="#111"/><rect x="659.0" y="475.8" width="1" height="5.2" fill="#111"/><rect x="669.0" y="476.8" width="1" height="4.2" fill="#111"/><rect x="672.0" y="475.9" width="1" height="5.1" fill="#111"/><rect x="684.0" y="476.3" width="1" height="4.7" fill="#111"/><rect x="710.0" y="475.9" width="1" height="5.1" fill="#111"/><rect x="760.0" y="476.2" width="1" height="4.8" fill="#111"/><rect x="761.0" y="475.8" width="1" height="5.2" fill="#111"/><rect x="764.0" y="476.8" width="1" height="4.2" fill="#111"/><rect x="775.0" y="474.3" width="1" height="6.7" fill="#111"/><rect x="817.0" y="475.8" width="1" height="5.2" fill="#111"/><rect x="836.0" y="475.9" width="1" height="5.1" fill="#111"/><rect x="841.0" y="474.7" width="1" height="6.3" fill="#111"/><rect x="858.0" y="475.8" width="1" height="5.2" fill="#111"/><rect x="862.0" y="477.1" width="1" height="3.9" fill="#111"/><rect x="871.0" y="476.4" width="1" height="4.6" fill="#111"/><rect x="875.0" y="477.0" width="1" height="4.0" fill="#111"/><rect x="152.0" y="469.0" width="1" height="12.0" fill="#111"/><rect x="181.0" y="456.0" width="1" height="25.0" fill="#111"/><rect x="265.0" y="470.0" width="1" height="11.0" fill="#111"/><rect x="303.0" y="449.6" width="1" height="31.4" fill="#111"/><rect x="435.0" y="467.0" width="1" height="14.0" fill="#111"/><rect x="456.0" y="471.0" width="1" height="10.0" fill="#111"/><rect x="488.0" y="472.0" width="1" height="9.0" fill="#111"/><rect x="527.0" y="471.0" width="1" height="10.0" fill="#111"/><rect x="717.0" y="466.0" width="1" height="15.0" fill="#111"/><rect x="213.9" y="457.6" width="1" height="41.39999999999998" fill="#f21d1d"/><rect x="248.9" y="454.4" width="1" height="44.60000000000002" fill="#f21d1d"/><rect x="573.8" y="454.4" width="1.2" height="44.60000000000002" fill="#f21d1d"/><rect x="647.0" y="454.4" width="1.2" height="44.60000000000002" fill="#f21d1d"/><rect x="653.6" y="457.6" width="1.2" height="41.39999999999998" fill="#f21d1d"/><rect x="666.4" y="454.4" width="1.2" height="44.60000000000002" fill="#f21d1d"/><rect x="746.0" y="457.8" width="1.2" height="41.19999999999999" fill="#f21d1d"/><rect x="838.9" y="409.5" width="1.2" height="89.5" fill="#f21d1d"/><rect x="861.6" y="409.5" width="1.2" height="89.5" fill="#f21d1d"/><rect x="864.6" y="416.4" width="1.2" height="82.60000000000002" fill="#f21d1d"/><rect x="871.1" y="456.8" width="1.2" height="42.19999999999999" fill="#f21d1d"/><rect x="877.8" y="454.7" width="1.2" height="44.30000000000001" fill="#f21d1d"/><rect x="861.6" y="457.8" width="2" height="41.2" fill="#f00"/><rect x="871" y="471.5" width="2.5" height="27.5" fill="#f00"/><rect x="21" y="309.8" width="1.3" height="190" fill="#6e6e6e"/><rect x="21" y="498.6" width="955.5" height="1.5" fill="#858585"/><rect x="22.3" y="500.1" width="954.2" height="10.5" fill="#f6f6f6"/><rect x="22.3" y="500.1" width="954.2" height="1.5" fill="#fdfdfd"/><polygon points="121.6,512.2 129.5,500.6 128.7,500.6 136.6,512.2" fill="#f00"/><polygon points="141.6,512.2 149.5,500.6 175.5,500.6 183.4,512.2" fill="#f00"/><polygon points="188.0,512.2 195.9,500.6 200.2,500.6 202.3,503.0 204.4,500.6 207.0,500.6 215.2,510.0 223.4,500.6 268.6,500.6 271.6,504.0 274.6,500.6 274.2,500.6 277.2,504.0 280.2,500.6 279.0,500.6 282.0,504.0 285.0,500.6 300.8,500.6 308.5,509.5 316.2,500.6 346.3,500.6 349.3,504.0 352.3,500.6 349.5,500.6 353.3,505.0 357.1,500.6 355.9,500.6 358.9,504.0 361.9,500.6 380.1,500.6 387.8,509.5 395.5,500.6 428.4,500.6 431.4,504.0 434.4,500.6 434.0,500.6 437.0,504.0 440.0,500.6 447.7,500.6 455.4,509.5 463.1,500.6 469.5,500.6 475.5,507.5 481.5,500.6 511.3,500.6 514.7,504.5 518.1,500.6 516.5,500.6 519.5,504.0 522.5,500.6 533.5,500.6 541.2,509.5 548.9,500.6 559.1,500.6 566.0,508.5 572.9,500.6 587.4,500.6 590.4,504.0 593.4,500.6 592.6,500.6 596.0,504.5 599.4,500.6 599.9,500.6 607.2,509.0 614.5,500.6 613.2,500.6 620.9,509.5 628.6,500.6 657.4,500.6 667.3,512.0 677.2,500.6 673.0,500.6 676.0,504.0 679.0,500.6 737.3,500.6 739.8,503.5 742.3,500.6 747.7,500.6 750.2,503.5 752.7,500.6 754.9,500.6 757.4,503.5 759.9,500.6 788.3,500.6 794.3,507.5 800.3,500.6 816.4,500.6 826.3,512.0 836.2,500.6 831.4,500.6 834.4,504.0 837.4,500.6 846.4,500.6 852.8,508.0 859.2,500.6 864.4,500.6 870.4,507.5 876.4,500.6 874.5,500.6 879.2,506.0 883.9,500.6 885.6,500.6 893.5,512.2" fill="#f00"/></svg><svg style="position:absolute;left:0;top:0" width="999" height="518"><path d="M963 382 L973.4 405.3 L963 428.6 Z" fill="#000" fill-opacity="0.06"/></svg><div style="position:absolute;left:85.0px;top:500px;width:1.2px;height:2.6px;background:#222"></div><div style="position:absolute;left:164.6px;top:500px;width:1.2px;height:2.6px;background:#222"></div><div style="position:absolute;left:244.2px;top:500px;width:1.2px;height:2.6px;background:#222"></div><div style="position:absolute;left:323.79999999999995px;top:500px;width:1.2px;height:2.6px;background:#222"></div><div style="position:absolute;left:403.4px;top:500px;width:1.2px;height:2.6px;background:#222"></div><div style="position:absolute;left:483.0px;top:500px;width:1.2px;height:2.6px;background:#222"></div><div style="position:absolute;left:562.5999999999999px;top:500px;width:1.2px;height:2.6px;background:#222"></div><div style="position:absolute;left:642.1999999999999px;top:500px;width:1.2px;height:2.6px;background:#222"></div><div style="position:absolute;left:721.8px;top:500px;width:1.2px;height:2.6px;background:#222"></div><div style="position:absolute;left:801.4px;top:500px;width:1.2px;height:2.6px;background:#222"></div><div style="position:absolute;left:881.0px;top:500px;width:1.2px;height:2.6px;background:#222"></div><div style="position:absolute;left:960.5999999999999px;top:500px;width:1.2px;height:2.6px;background:#222"></div><div class="t" style="left:14.8px;top:405.5px;font-size:10px;line-height:10px;color:#666;-webkit-text-stroke:0;transform:translate(-50%,-50%) rotate(-90deg) scaleX(0.83);">Latency (ms)</div><div class="t" style="left:981.5px;top:411.5px;font-size:10px;line-height:10px;color:#c23a50;transform:translate(-50%,-50%) rotate(90deg) scaleX(0.8);">Packet Loss %</div><svg style="position:absolute;left:0;top:0" width="999" height="518"><circle cx="490.7" cy="272.4" r="1.7" fill="#777"/><circle cx="498.4" cy="272.4" r="1.7" fill="#777"/><circle cx="506.3" cy="272.4" r="1.7" fill="#777"/><circle cx="971.8" cy="280.3" r="5" fill="#dedede"/><path d="M969.6 279.2 L971.8 281.4 L974 279.2" stroke="#8a8a8a" stroke-width="1" fill="none"/></svg><div style="position:absolute;left:1.8499999999999996px;top:78.89999999999999px;width:12.5px;height:12.8px;border-radius:6.4px;background:#8fcb6e"></div><div style="position:absolute;left:1.9000000000000004px;top:94.89999999999999px;width:15px;height:12.8px;border-radius:6.4px;background:#8fcb6e"></div><div style="position:absolute;left:1.9000000000000004px;top:110.89999999999999px;width:15px;height:12.8px;border-radius:6.4px;background:#8fcb6e"></div><div style="position:absolute;left:1.9000000000000004px;top:126.9px;width:15px;height:12.8px;border-radius:6.4px;background:#8fcb6e"></div>
<div class="t" style="left:3.50px;top:6.11px;font-size:10.5px;line-height:10.5px;color:#333;font-weight:bold;transform:scaleX(0.9114);transform-origin:0 0;">google.de</div><div class="t" style="left:51.50px;top:6.11px;font-size:10.5px;line-height:10.5px;color:#444;font-weight:normal;transform:scaleX(0.8691);transform-origin:0 0;">/ 2a00:1450:400c:c00::5e</div><div class="t" style="left:660.50px;top:6.11px;font-size:10.5px;line-height:10.5px;color:#333;font-weight:normal;transform:scaleX(0.9147);transform-origin:0 0;">Interval</div><div class="t" style="left:698.00px;top:6.11px;font-size:10.5px;line-height:10.5px;color:#222;font-weight:normal;transform:scaleX(0.8600);transform-origin:0 0;">2,5 seconds</div><div class="t" style="left:782.50px;top:6.11px;font-size:10.5px;line-height:10.5px;color:#333;font-weight:normal;transform:scaleX(0.8600);transform-origin:0 0;">Focus</div><div class="t" style="left:812.50px;top:6.11px;font-size:10.5px;line-height:10.5px;color:#222;font-weight:normal;transform:scaleX(0.8600);transform-origin:0 0;">Auto</div><div class="t" style="left:918.00px;top:2.68px;font-size:9px;line-height:9px;color:#333;font-weight:normal;transform:scaleX(0.8514);transform-origin:0 0;">100ms</div><div class="t" style="left:950.00px;top:2.68px;font-size:9px;line-height:9px;color:#333;font-weight:normal;transform:scaleX(0.8514);transform-origin:0 0;">200ms</div><div class="t" style="left:11.37px;top:30.51px;font-size:10.5px;line-height:10.5px;color:#333;font-weight:normal;transform:scaleX(0.8600);transform-origin:50% 0;">Hop</div><div class="t" style="left:53.00px;top:30.51px;font-size:10.5px;line-height:10.5px;color:#333;font-weight:normal;transform:scaleX(0.8600);transform-origin:50% 0;">Err</div><div class="t" style="left:84.23px;top:30.51px;font-size:10.5px;line-height:10.5px;color:#333;font-weight:normal;transform:scaleX(0.8600);transform-origin:50% 0;">Count</div><div class="t" style="left:212.79px;top:30.51px;font-size:10.5px;line-height:10.5px;color:#333;font-weight:normal;transform:scaleX(0.8600);transform-origin:50% 0;">IP</div><div class="t" style="left:402.99px;top:30.51px;font-size:10.5px;line-height:10.5px;color:#333;font-weight:normal;transform:scaleX(0.8600);transform-origin:50% 0;">Name</div><div class="t" style="left:526.05px;top:30.51px;font-size:10.5px;line-height:10.5px;color:#333;font-weight:normal;transform:scaleX(0.8600);transform-origin:50% 0;">Avg</div><div class="t" style="left:562.79px;top:30.51px;font-size:10.5px;line-height:10.5px;color:#333;font-weight:normal;transform:scaleX(0.8600);transform-origin:50% 0;">Min</div><div class="t" style="left:597.58px;top:30.51px;font-size:10.5px;line-height:10.5px;color:#333;font-weight:normal;transform:scaleX(0.8600);transform-origin:50% 0;">Max</div><div class="t" style="left:635.04px;top:30.51px;font-size:10.5px;line-height:10.5px;color:#333;font-weight:normal;transform:scaleX(0.8600);transform-origin:50% 0;">Cur</div><div class="t" style="left:672.20px;top:30.51px;font-size:10.5px;line-height:10.5px;color:#333;font-weight:normal;transform:scaleX(0.8600);transform-origin:50% 0;">Jttr</div><div class="t" style="left:704.41px;top:30.51px;font-size:10.5px;line-height:10.5px;color:#333;font-weight:normal;transform:scaleX(0.8600);transform-origin:50% 0;">PL%</div><div class="t" style="left:742.04px;top:30.51px;font-size:10.5px;line-height:10.5px;color:#333;font-weight:normal;transform:scaleX(0.8600);transform-origin:50% 0;">MOS</div><div class="t" style="left:43.30px;top:47.61px;font-size:10.5px;line-height:10.5px;color:#22397a;font-weight:normal;transform:scaleX(0.8561);transform-origin:100% 0;">13712</div><div class="t" style="left:122.50px;top:47.61px;font-size:10.5px;line-height:10.5px;color:#22397a;font-weight:normal;transform:scaleX(0.8600);transform-origin:0 0;">-</div><div class="t" style="left:701.22px;top:47.61px;font-size:10.5px;line-height:10.5px;color:#22397a;font-weight:normal;transform:scaleX(0.8600);transform-origin:100% 0;">100,0</div><div class="t" style="left:43.30px;top:63.61px;font-size:10.5px;line-height:10.5px;color:#22397a;font-weight:normal;transform:scaleX(0.8561);transform-origin:100% 0;">13712</div><div class="t" style="left:122.50px;top:63.61px;font-size:10.5px;line-height:10.5px;color:#22397a;font-weight:normal;transform:scaleX(0.8600);transform-origin:0 0;">-</div><div class="t" style="left:701.22px;top:63.61px;font-size:10.5px;line-height:10.5px;color:#22397a;font-weight:normal;transform:scaleX(0.8600);transform-origin:100% 0;">100,0</div><div class="t" style="left:49.14px;top:79.61px;font-size:10.5px;line-height:10.5px;color:#22397a;font-weight:normal;transform:scaleX(0.8600);transform-origin:100% 0;">1926</div><div class="t" style="left:88.39px;top:79.61px;font-size:10.5px;line-height:10.5px;color:#22397a;font-weight:normal;transform:scaleX(0.8600);transform-origin:100% 0;">4121</div><div class="t" style="left:122.50px;top:79.61px;font-size:10.5px;line-height:10.5px;color:#22397a;font-weight:normal;transform:scaleX(0.8600);transform-origin:0 0;">2001:4860::c:4000:f874</div><div class="t" style="left:321.00px;top:79.61px;font-size:10.5px;line-height:10.5px;color:#22397a;font-weight:normal;transform:scaleX(0.8600);transform-origin:0 0;">2001:4860::c:4000:f874</div><div class="t" style="left:526.56px;top:79.61px;font-size:10.5px;line-height:10.5px;color:#22397a;font-weight:normal;transform:scaleX(0.8600);transform-origin:100% 0;">26,9</div><div class="t" style="left:562.06px;top:79.61px;font-size:10.5px;line-height:10.5px;color:#22397a;font-weight:normal;transform:scaleX(0.8600);transform-origin:100% 0;">18,2</div><div class="t" style="left:592.97px;top:79.61px;font-size:10.5px;line-height:10.5px;color:#22397a;font-weight:normal;transform:scaleX(0.8600);transform-origin:100% 0;">302,3</div><div class="t" style="left:634.56px;top:79.61px;font-size:10.5px;line-height:10.5px;color:#22397a;font-weight:normal;transform:scaleX(0.8600);transform-origin:100% 0;">24,9</div><div class="t" style="left:676.64px;top:79.61px;font-size:10.5px;line-height:10.5px;color:#22397a;font-weight:normal;transform:scaleX(0.8600);transform-origin:100% 0;">4,1</div><div class="t" style="left:707.06px;top:79.61px;font-size:10.5px;line-height:10.5px;color:#22397a;font-weight:normal;transform:scaleX(0.8600);transform-origin:100% 0;">46,7</div><div class="t" style="left:762.16px;top:79.61px;font-size:10.5px;line-height:10.5px;color:#22397a;font-weight:normal;transform:scaleX(0.8600);transform-origin:100% 0;">1</div><div class="t" style="left:66.66px;top:95.61px;font-size:10.5px;line-height:10.5px;color:#22397a;font-weight:normal;transform:scaleX(0.8600);transform-origin:100% 0;">2</div><div class="t" style="left:88.39px;top:95.61px;font-size:10.5px;line-height:10.5px;color:#22397a;font-weight:normal;transform:scaleX(0.8600);transform-origin:100% 0;">2562</div><div class="t" style="left:122.50px;top:95.61px;font-size:10.5px;line-height:10.5px;color:#22397a;font-weight:normal;transform:scaleX(0.8600);transform-origin:0 0;">2001:4860::8:4000:d324</div><div class="t" style="left:321.00px;top:95.61px;font-size:10.5px;line-height:10.5px;color:#22397a;font-weight:normal;transform:scaleX(0.8600);transform-origin:0 0;">2001:4860::8:4000:d324</div><div class="t" style="left:526.56px;top:95.61px;font-size:10.5px;line-height:10.5px;color:#22397a;font-weight:normal;transform:scaleX(0.8600);transform-origin:100% 0;">33,0</div><div class="t" style="left:562.06px;top:95.61px;font-size:10.5px;line-height:10.5px;color:#22397a;font-weight:normal;transform:scaleX(0.8600);transform-origin:100% 0;">25,1</div><div class="t" style="left:592.97px;top:95.61px;font-size:10.5px;line-height:10.5px;color:#22397a;font-weight:normal;transform:scaleX(0.8600);transform-origin:100% 0;">162,7</div><div class="t" style="left:634.56px;top:95.61px;font-size:10.5px;line-height:10.5px;color:#22397a;font-weight:normal;transform:scaleX(0.8600);transform-origin:100% 0;">33,2</div><div class="t" style="left:676.64px;top:95.61px;font-size:10.5px;line-height:10.5px;color:#22397a;font-weight:normal;transform:scaleX(0.8600);transform-origin:100% 0;">6,7</div><div class="t" style="left:712.89px;top:95.61px;font-size:10.5px;line-height:10.5px;color:#22397a;font-weight:normal;transform:scaleX(0.8600);transform-origin:100% 0;">0,1</div><div class="t" style="left:747.56px;top:95.61px;font-size:10.5px;line-height:10.5px;color:#22397a;font-weight:normal;transform:scaleX(0.8600);transform-origin:100% 0;">4,38</div><div class="t" style="left:54.97px;top:111.61px;font-size:10.5px;line-height:10.5px;color:#22397a;font-weight:normal;transform:scaleX(0.8600);transform-origin:100% 0;">160</div><div class="t" style="left:88.39px;top:111.61px;font-size:10.5px;line-height:10.5px;color:#22397a;font-weight:normal;transform:scaleX(0.8600);transform-origin:100% 0;">4098</div><div class="t" style="left:122.50px;top:111.61px;font-size:10.5px;line-height:10.5px;color:#22397a;font-weight:normal;transform:scaleX(0.8600);transform-origin:0 0;">2001:4860::22:4001:70b</div><div class="t" style="left:321.00px;top:111.61px;font-size:10.5px;line-height:10.5px;color:#22397a;font-weight:normal;transform:scaleX(0.8600);transform-origin:0 0;">2001:4860::22:4001:70b</div><div class="t" style="left:526.56px;top:111.61px;font-size:10.5px;line-height:10.5px;color:#22397a;font-weight:normal;transform:scaleX(0.8600);transform-origin:100% 0;">35,1</div><div class="t" style="left:562.06px;top:111.61px;font-size:10.5px;line-height:10.5px;color:#22397a;font-weight:normal;transform:scaleX(0.8600);transform-origin:100% 0;">25,7</div><div class="t" style="left:588.69px;top:111.61px;font-size:10.5px;line-height:10.5px;color:#22397a;font-weight:normal;transform:scaleX(0.8600);transform-origin:100% 0;">1115,1</div><div class="t" style="left:634.56px;top:111.61px;font-size:10.5px;line-height:10.5px;color:#22397a;font-weight:normal;transform:scaleX(0.8600);transform-origin:100% 0;">36,1</div><div class="t" style="left:676.64px;top:111.61px;font-size:10.5px;line-height:10.5px;color:#22397a;font-weight:normal;transform:scaleX(0.8600);transform-origin:100% 0;">9,0</div><div class="t" style="left:712.89px;top:111.61px;font-size:10.5px;line-height:10.5px;color:#22397a;font-weight:normal;transform:scaleX(0.8600);transform-origin:100% 0;">3,9</div><div class="t" style="left:747.56px;top:111.61px;font-size:10.5px;line-height:10.5px;color:#22397a;font-weight:normal;transform:scaleX(0.8600);transform-origin:100% 0;">4,09</div><div class="t" style="left:54.97px;top:127.61px;font-size:10.5px;line-height:10.5px;color:#22397a;font-weight:normal;transform:scaleX(0.8600);transform-origin:100% 0;">599</div><div class="t" style="left:94.22px;top:127.61px;font-size:10.5px;line-height:10.5px;color:#22397a;font-weight:normal;transform:scaleX(0.8600);transform-origin:100% 0;">992</div><div class="t" style="left:122.50px;top:127.61px;font-size:10.5px;line-height:10.5px;color:#22397a;font-weight:normal;transform:scaleX(0.8600);transform-origin:0 0;">2001:4860:0:1::1c61</div><div class="t" style="left:321.00px;top:127.61px;font-size:10.5px;line-height:10.5px;color:#22397a;font-weight:normal;transform:scaleX(0.8600);transform-origin:0 0;">2001:4860:0:1::1c61</div><div class="t" style="left:526.56px;top:127.61px;font-size:10.5px;line-height:10.5px;color:#22397a;font-weight:normal;transform:scaleX(0.8600);transform-origin:100% 0;">32,0</div><div class="t" style="left:562.06px;top:127.61px;font-size:10.5px;line-height:10.5px;color:#22397a;font-weight:normal;transform:scaleX(0.8600);transform-origin:100% 0;">25,4</div><div class="t" style="left:592.97px;top:127.61px;font-size:10.5px;line-height:10.5px;color:#22397a;font-weight:normal;transform:scaleX(0.8600);transform-origin:100% 0;">109,5</div><div class="t" style="left:634.56px;top:127.61px;font-size:10.5px;line-height:10.5px;color:#22397a;font-weight:normal;transform:scaleX(0.8600);transform-origin:100% 0;">34,9</div><div class="t" style="left:676.64px;top:127.61px;font-size:10.5px;line-height:10.5px;color:#22397a;font-weight:normal;transform:scaleX(0.8600);transform-origin:100% 0;">5,2</div><div class="t" style="left:707.06px;top:127.61px;font-size:10.5px;line-height:10.5px;color:#22397a;font-weight:normal;transform:scaleX(0.8600);transform-origin:100% 0;">60,4</div><div class="t" style="left:762.16px;top:127.61px;font-size:10.5px;line-height:10.5px;color:#22397a;font-weight:normal;transform:scaleX(0.8600);transform-origin:100% 0;">1</div><div class="t" style="left:43.30px;top:143.61px;font-size:10.5px;line-height:10.5px;color:#22397a;font-weight:normal;transform:scaleX(0.8561);transform-origin:100% 0;">13712</div><div class="t" style="left:122.50px;top:143.61px;font-size:10.5px;line-height:10.5px;color:#22397a;font-weight:normal;transform:scaleX(0.8600);transform-origin:0 0;">-</div><div class="t" style="left:701.22px;top:143.61px;font-size:10.5px;line-height:10.5px;color:#22397a;font-weight:normal;transform:scaleX(0.8600);transform-origin:100% 0;">100,0</div><div class="t" style="left:43.30px;top:159.61px;font-size:10.5px;line-height:10.5px;color:#22397a;font-weight:normal;transform:scaleX(0.8561);transform-origin:100% 0;">13712</div><div class="t" style="left:122.50px;top:159.61px;font-size:10.5px;line-height:10.5px;color:#22397a;font-weight:normal;transform:scaleX(0.8600);transform-origin:0 0;">-</div><div class="t" style="left:701.22px;top:159.61px;font-size:10.5px;line-height:10.5px;color:#22397a;font-weight:normal;transform:scaleX(0.8600);transform-origin:100% 0;">100,0</div><div class="t" style="left:43.30px;top:175.61px;font-size:10.5px;line-height:10.5px;color:#22397a;font-weight:normal;transform:scaleX(0.8561);transform-origin:100% 0;">13712</div><div class="t" style="left:122.50px;top:175.61px;font-size:10.5px;line-height:10.5px;color:#22397a;font-weight:normal;transform:scaleX(0.8600);transform-origin:0 0;">-</div><div class="t" style="left:701.22px;top:175.61px;font-size:10.5px;line-height:10.5px;color:#22397a;font-weight:normal;transform:scaleX(0.8600);transform-origin:100% 0;">100,0</div><div class="t" style="left:43.30px;top:191.61px;font-size:10.5px;line-height:10.5px;color:#22397a;font-weight:normal;transform:scaleX(0.8561);transform-origin:100% 0;">13712</div><div class="t" style="left:122.50px;top:191.61px;font-size:10.5px;line-height:10.5px;color:#22397a;font-weight:normal;transform:scaleX(0.8600);transform-origin:0 0;">-</div><div class="t" style="left:701.22px;top:191.61px;font-size:10.5px;line-height:10.5px;color:#22397a;font-weight:normal;transform:scaleX(0.8600);transform-origin:100% 0;">100,0</div><div class="t" style="left:43.30px;top:207.61px;font-size:10.5px;line-height:10.5px;color:#22397a;font-weight:normal;transform:scaleX(0.8561);transform-origin:100% 0;">13712</div><div class="t" style="left:122.50px;top:207.61px;font-size:10.5px;line-height:10.5px;color:#22397a;font-weight:normal;transform:scaleX(0.8600);transform-origin:0 0;">-</div><div class="t" style="left:701.22px;top:207.61px;font-size:10.5px;line-height:10.5px;color:#22397a;font-weight:normal;transform:scaleX(0.8600);transform-origin:100% 0;">100,0</div><div class="t" style="left:43.30px;top:223.61px;font-size:10.5px;line-height:10.5px;color:#22397a;font-weight:normal;transform:scaleX(0.8561);transform-origin:100% 0;">13712</div><div class="t" style="left:122.50px;top:223.61px;font-size:10.5px;line-height:10.5px;color:#22397a;font-weight:normal;transform:scaleX(0.8600);transform-origin:0 0;">-</div><div class="t" style="left:701.22px;top:223.61px;font-size:10.5px;line-height:10.5px;color:#22397a;font-weight:normal;transform:scaleX(0.8600);transform-origin:100% 0;">100,0</div><div class="t" style="left:43.30px;top:239.61px;font-size:10.5px;line-height:10.5px;color:#22397a;font-weight:normal;transform:scaleX(0.8561);transform-origin:100% 0;">13712</div><div class="t" style="left:122.50px;top:239.61px;font-size:10.5px;line-height:10.5px;color:#22397a;font-weight:normal;transform:scaleX(0.8600);transform-origin:0 0;">-</div><div class="t" style="left:701.22px;top:239.61px;font-size:10.5px;line-height:10.5px;color:#22397a;font-weight:normal;transform:scaleX(0.8600);transform-origin:100% 0;">100,0</div><div class="t" style="left:43.30px;top:255.61px;font-size:10.5px;line-height:10.5px;color:#22397a;font-weight:normal;transform:scaleX(0.8561);transform-origin:100% 0;">13712</div><div class="t" style="left:122.50px;top:255.61px;font-size:10.5px;line-height:10.5px;color:#22397a;font-weight:normal;transform:scaleX(0.8600);transform-origin:0 0;">-</div><div class="t" style="left:701.22px;top:255.61px;font-size:10.5px;line-height:10.5px;color:#22397a;font-weight:normal;transform:scaleX(0.8600);transform-origin:100% 0;">100,0</div><div class="t" style="left:776.00px;top:32.18px;font-size:9px;line-height:9px;color:#333;font-weight:normal;transform:scaleX(0.8711);transform-origin:0 0;">0 ms</div><div class="t" style="left:862.11px;top:29.11px;font-size:10.5px;line-height:10.5px;color:#333;font-weight:normal;transform:scaleX(0.8972);transform-origin:50% 0;">Latency</div><div class="t" style="left:949.47px;top:32.18px;font-size:9px;line-height:9px;color:#333;font-weight:normal;transform:scaleX(0.8398);transform-origin:100% 0;">2236 ms</div><div class="t" style="left:21.00px;top:274.44px;font-size:10px;line-height:10px;color:#404040;font-weight:normal;transform:scaleX(0.8554);transform-origin:0 0;">google.de (2a00:1450:400c:c00::5e) hop 22</div><div class="t" style="left:759.88px;top:274.54px;font-size:10px;line-height:10px;color:#404040;font-weight:normal;transform:scaleX(0.8590);transform-origin:100% 0;">12 hours (29.11.2021 13:11 - 30.11.2021 1:11)</div><div class="t" style="left:7.38px;top:290.34px;font-size:10px;line-height:10px;color:#a32a2a;font-weight:normal;transform:scaleX(0.8989);transform-origin:100% 0;">35</div><div class="t" style="left:1.81px;top:307.54px;font-size:10px;line-height:10px;color:#444;font-weight:normal;transform:scaleX(0.8989);transform-origin:100% 0;">280</div><div class="t" style="left:12.94px;top:488.54px;font-size:10px;line-height:10px;color:#444;font-weight:normal;transform:scaleX(0.8989);transform-origin:100% 0;">0</div><div class="t" style="left:977.50px;top:308.84px;font-size:10px;line-height:10px;color:#c0242a;font-weight:normal;transform:scaleX(0.8989);transform-origin:0 0;">30</div><div class="t" style="left:5.18px;top:80.41px;font-size:10.5px;line-height:10.5px;color:#1e3470;font-weight:normal;transform:scaleX(0.8898);transform-origin:50% 0;">9</div><div class="t" style="left:3.56px;top:96.41px;font-size:10.5px;line-height:10.5px;color:#1e3470;font-weight:normal;transform:scaleX(0.7957);transform-origin:50% 0;">10</div><div class="t" style="left:3.95px;top:112.41px;font-size:10.5px;line-height:10.5px;color:#1e3470;font-weight:normal;transform:scaleX(0.8527);transform-origin:50% 0;">11</div><div class="t" style="left:3.56px;top:128.41px;font-size:10.5px;line-height:10.5px;color:#1e3470;font-weight:normal;transform:scaleX(0.7957);transform-origin:50% 0;">12</div>
<div style="position:absolute;left:22px;top:497px;width:954.5px;height:20px;overflow:hidden"><div class="t" style="left:-58.10px;top:3.88px;font-size:9px;line-height:9px;color:#40573c;font-weight:normal;transform:scaleX(0.9437);transform-origin:0 0;">29.11.2021 13:00</div><div class="t" style="left:21.50px;top:3.88px;font-size:9px;line-height:9px;color:#40573c;font-weight:normal;transform:scaleX(0.9437);transform-origin:0 0;">29.11.2021 14:00</div><div class="t" style="left:101.10px;top:3.88px;font-size:9px;line-height:9px;color:#40573c;font-weight:normal;transform:scaleX(0.9437);transform-origin:0 0;">29.11.2021 15:00</div><div class="t" style="left:180.70px;top:3.88px;font-size:9px;line-height:9px;color:#40573c;font-weight:normal;transform:scaleX(0.9437);transform-origin:0 0;">29.11.2021 16:00</div><div class="t" style="left:260.30px;top:3.88px;font-size:9px;line-height:9px;color:#40573c;font-weight:normal;transform:scaleX(0.9437);transform-origin:0 0;">29.11.2021 17:00</div><div class="t" style="left:339.90px;top:3.88px;font-size:9px;line-height:9px;color:#40573c;font-weight:normal;transform:scaleX(0.9437);transform-origin:0 0;">29.11.2021 18:00</div><div class="t" style="left:419.50px;top:3.88px;font-size:9px;line-height:9px;color:#40573c;font-weight:normal;transform:scaleX(0.9437);transform-origin:0 0;">29.11.2021 19:00</div><div class="t" style="left:499.10px;top:3.88px;font-size:9px;line-height:9px;color:#40573c;font-weight:normal;transform:scaleX(0.9437);transform-origin:0 0;">29.11.2021 20:00</div><div class="t" style="left:578.70px;top:3.88px;font-size:9px;line-height:9px;color:#40573c;font-weight:normal;transform:scaleX(0.9437);transform-origin:0 0;">29.11.2021 21:00</div><div class="t" style="left:658.30px;top:3.88px;font-size:9px;line-height:9px;color:#40573c;font-weight:normal;transform:scaleX(0.9437);transform-origin:0 0;">29.11.2021 22:00</div><div class="t" style="left:737.90px;top:3.88px;font-size:9px;line-height:9px;color:#40573c;font-weight:normal;transform:scaleX(0.9437);transform-origin:0 0;">29.11.2021 23:00</div><div class="t" style="left:817.50px;top:3.88px;font-size:9px;line-height:9px;color:#40573c;font-weight:normal;transform:scaleX(0.9316);transform-origin:0 0;">30.11.2021 0:00</div><div class="t" style="left:897.10px;top:3.88px;font-size:9px;line-height:9px;color:#40573c;font-weight:normal;transform:scaleX(0.9316);transform-origin:0 0;">30.11.2021 1:00</div></div>
</body></html>
